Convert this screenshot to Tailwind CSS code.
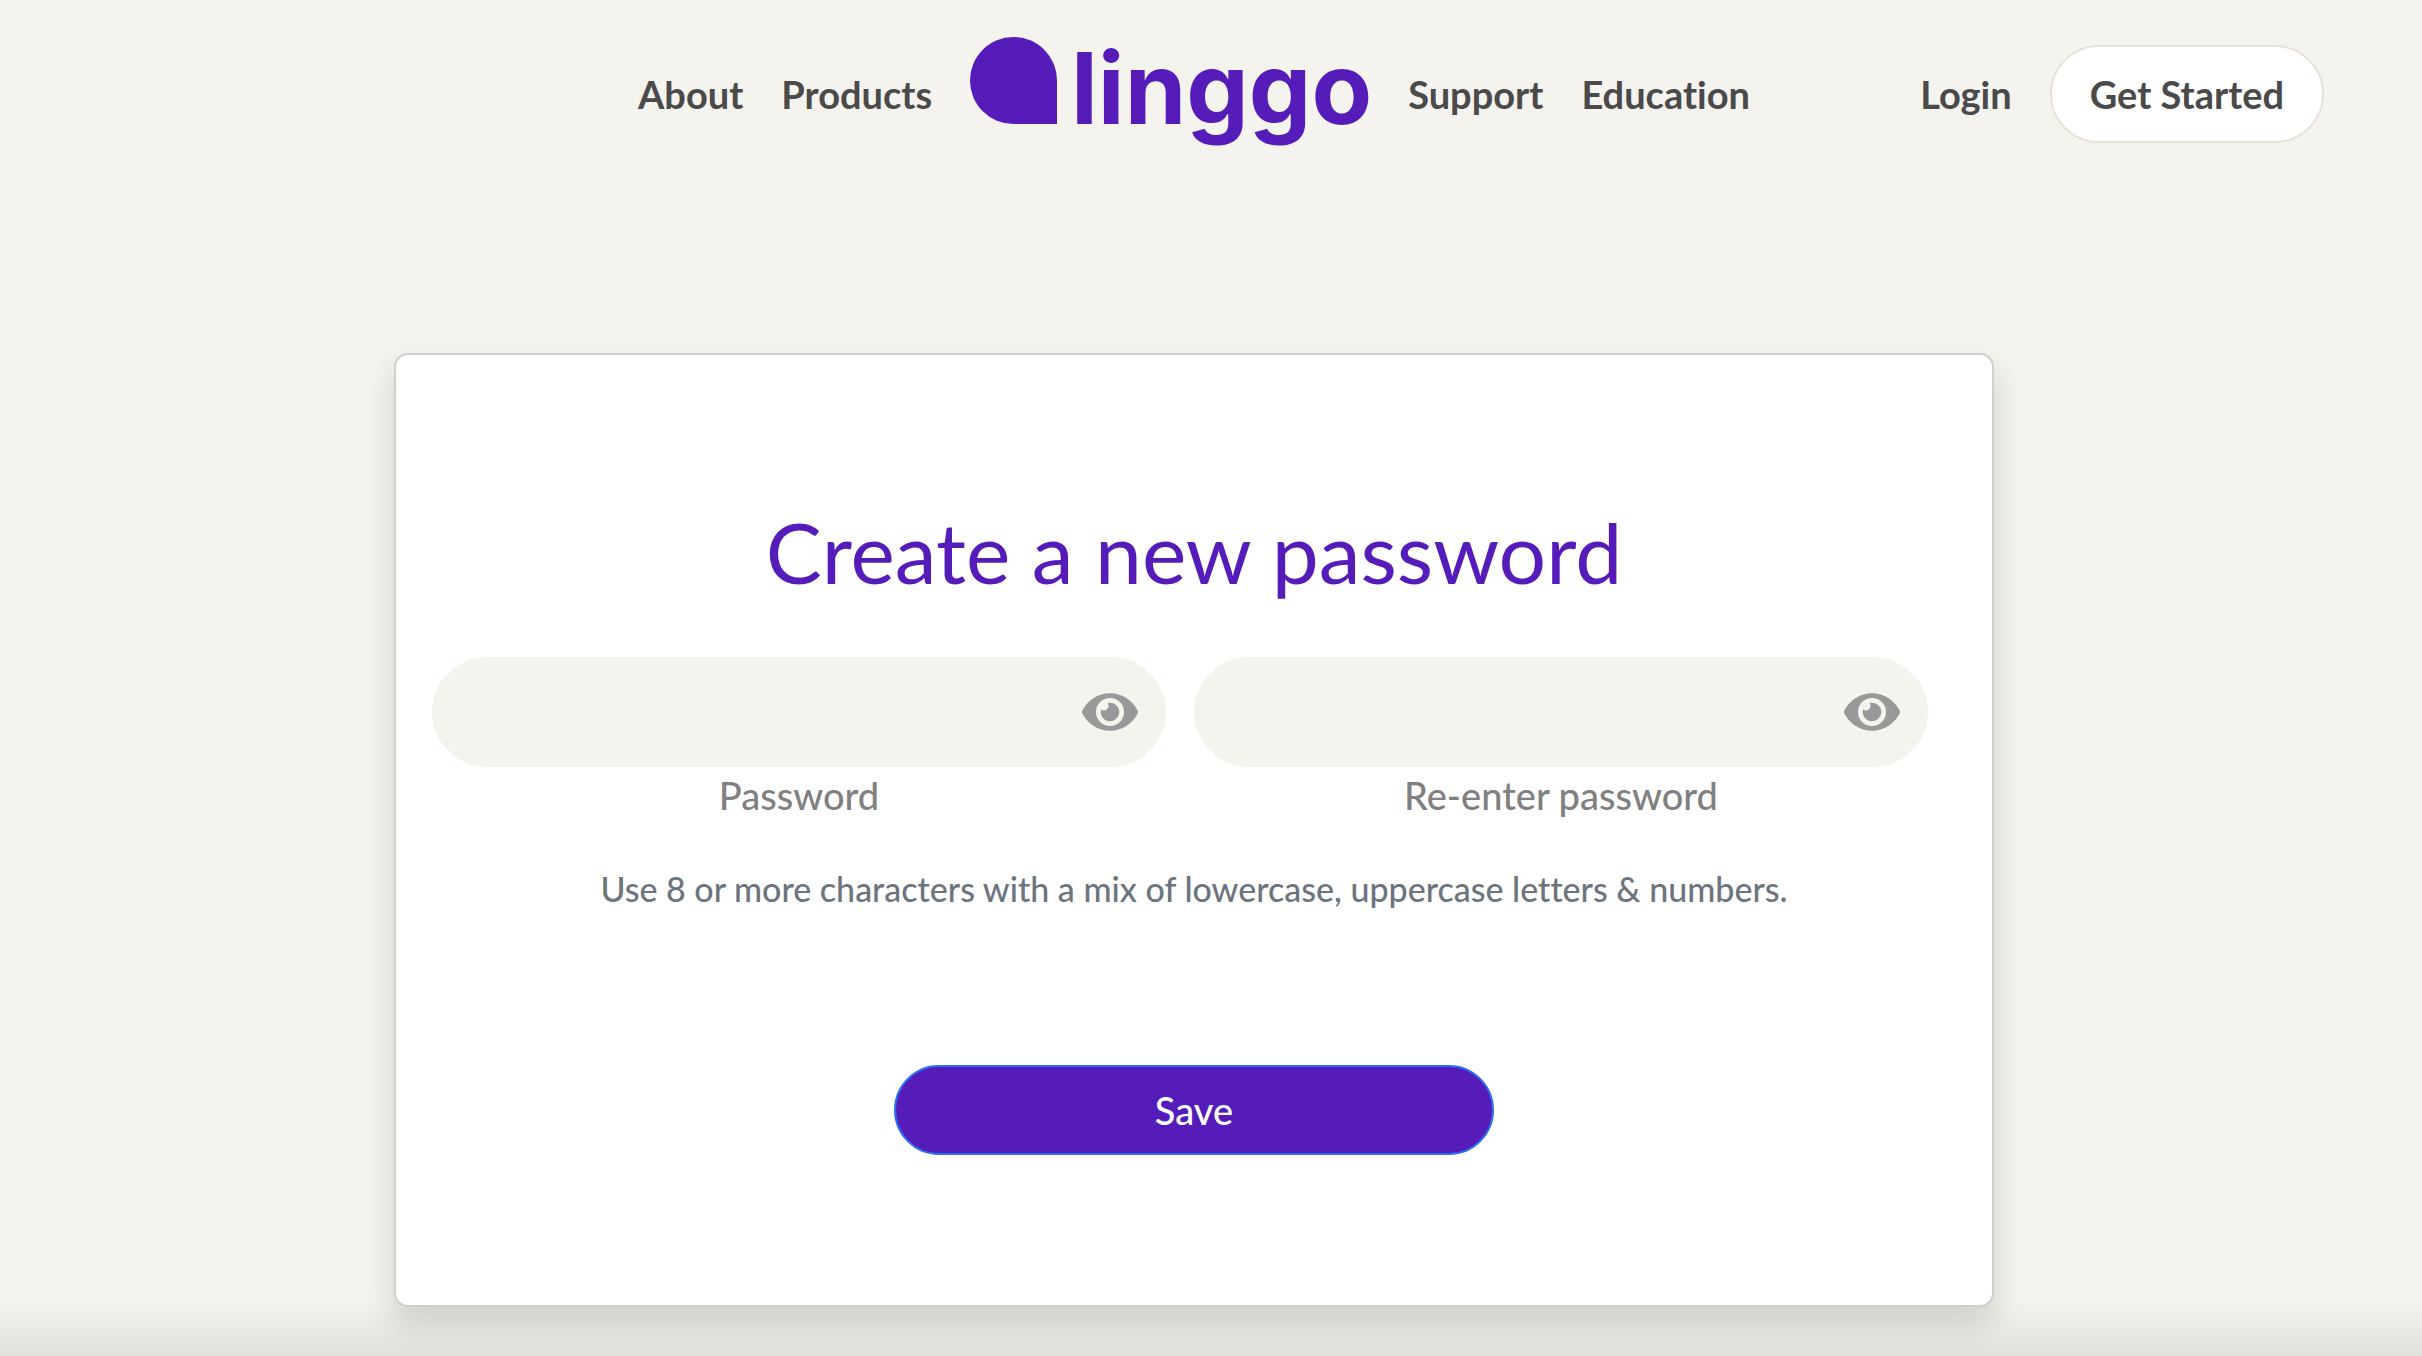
<!DOCTYPE html>
<html lang="en">
<head>
<meta charset="utf-8">
<meta name="viewport" content="width=device-width, initial-scale=1">
<title>linggo – Create a new password</title>
<script src="https://cdn.jsdelivr.net/npm/@tailwindcss/browser@4"></script>
</head>
<body class="relative min-h-screen overflow-hidden bg-[#f4f3ee] pr-[34px] font-['Lato',sans-serif] [font-variant-ligatures:none]">
  <header class="grid grid-cols-[1fr_auto_1fr] items-center pt-[23px] pr-16 pl-16 text-[38px] leading-[48px] font-bold text-[#4a4a4a]">
    <span></span>
    <nav class="flex items-center gap-[38px]" aria-label="Main">
      <a href="#about">About</a>
      <a href="#products">Products</a>
      <a href="#home" aria-label="linggo">
        <svg class="h-[142px] w-[400px] overflow-visible" viewBox="0 0 400 142" fill="#551cb9" aria-hidden="true">
          <path d="M43.500 14A43.500 43.500 0 0 1 87 57.500V101H43.500A43.500 43.500 0 0 1 43.500 14Z"/>
          <text x="101" y="101" font-family="Inter, sans-serif" font-size="99" font-weight="700">linggo</text>
        </svg>
      </a>
      <a href="#support">Support</a>
      <a href="#education">Education</a>
    </nav>
    <div class="flex items-center justify-end gap-[38px]">
      <a href="#login">Login</a>
      <a href="#start" class="rounded-full border-2 border-[#e6e2d9] bg-white px-[38px] py-[23px]">Get Started</a>
    </div>
  </header>

  <main class="px-6 pt-[188px] pb-12">
    <form class="mx-auto max-w-[1600px] rounded-[14px] border-2 border-[#d0d0d0] bg-white pt-[149px] pb-[150px] text-center shadow-[0_16px_32px_rgba(0,0,0,0.15)]">
      <h1 class="text-[84px] leading-[96px] text-[#551cb9]">Create a new password</h1>
      <div class="mt-[57px] grid grid-cols-2 gap-7 pr-16 pl-9 text-[38px] leading-[56px] font-medium text-[#808080]">
        <div>
          <div class="relative">
            <input id="password" type="password" class="block h-[110px] w-full rounded-full bg-[#f4f3ee] pr-24 pl-9">
            <button type="button" aria-label="Show password" class="absolute inset-y-0 right-7 flex items-center">
              <svg class="h-[50px] w-14" viewBox="0 0 576 512" fill="#999"><path d="M572.52 241.4C518.29 135.59 410.93 64 288 64S57.68 135.64 3.48 241.41a32.35 32.35 0 0 0 0 29.19C57.71 376.41 165.07 448 288 448s230.32-71.64 284.52-177.41a32.35 32.35 0 0 0 0-29.19zM288 400a144 144 0 1 1 144-144 143.93 143.93 0 0 1-144 144zm0-240a95.31 95.31 0 0 0-25.31 3.79 47.85 47.85 0 0 1-66.9 66.9A95.78 95.78 0 1 0 288 160z"/></svg>
            </button>
          </div>
          <label for="password" class="block">Password</label>
        </div>
        <div>
          <div class="relative">
            <input id="confirm" type="password" class="block h-[110px] w-full rounded-full bg-[#f4f3ee] pr-24 pl-9">
            <button type="button" aria-label="Show re-entered password" class="absolute inset-y-0 right-7 flex items-center">
              <svg class="h-[50px] w-14" viewBox="0 0 576 512" fill="#999"><path d="M572.52 241.4C518.29 135.59 410.93 64 288 64S57.68 135.64 3.48 241.41a32.35 32.35 0 0 0 0 29.19C57.71 376.41 165.07 448 288 448s230.32-71.64 284.52-177.41a32.35 32.35 0 0 0 0-29.19zM288 400a144 144 0 1 1 144-144 143.93 143.93 0 0 1-144 144zm0-240a95.31 95.31 0 0 0-25.31 3.79 47.85 47.85 0 0 1-66.9 66.9A95.78 95.78 0 1 0 288 160z"/></svg>
            </button>
          </div>
          <label for="confirm" class="block">Re-enter password</label>
        </div>
      </div>
      <p class="mt-[42px] text-[34px] leading-[48px] font-medium text-[#6c757d]">Use 8 or more characters with a mix of lowercase, uppercase letters &amp; numbers.</p>
      <button type="submit" class="mt-[152px] h-[90px] w-[600px] max-w-full rounded-full border-2 border-[#2b6df2] bg-[#551cb9] text-[38px] leading-[48px] font-medium text-white">Save</button>
    </form>
  </main>
  <div class="pointer-events-none absolute inset-x-0 bottom-0 h-14 bg-linear-to-b from-transparent to-black/8"></div>
</body>
</html>
